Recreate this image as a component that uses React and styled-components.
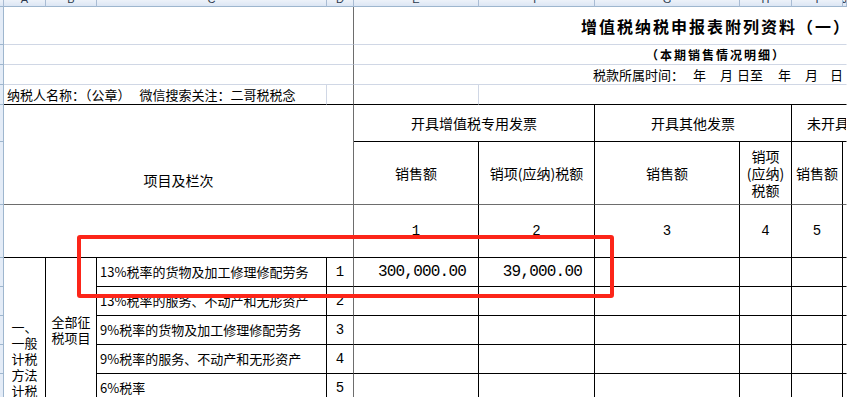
import React from 'react';
import styled, { createGlobalStyle } from 'styled-components';

const GlobalStyle = createGlobalStyle`
  html, body { margin: 0; padding: 0; background: #fff; }
  body { font-family: "Noto Sans CJK SC", sans-serif; color: #000; }
`;

const COLS = [42, 51, 230, 27, 125, 116, 145, 52, 51, 4];
const LETTERS = ['A', 'B', 'C', 'D', 'E', 'F', 'G', 'H', 'I', 'J'];
const ROWS = [38, 20, 20, 20, 37, 63, 53, 29, 29, 29, 29, 29, 29, 29];
const LINE = { grid: '#d0d7e5', black: '#000', freeze: '#6d6d6d', none: 'transparent' };

const Page = styled.div`
  position: relative;
  width: 847px;
  height: 397px;
  overflow: hidden;
  display: flex;
  flex-direction: column;
  background: #fff;
`;

const ColHeader = styled.div`
  display: flex;
  flex: none;
  height: 7px;
`;

const ColHeadCell = styled.div`
  box-sizing: border-box;
  flex: ${p => (p.$w ? `0 0 ${p.$w}px` : '1 1 auto')};
  height: 7px;
  border-right: 1px solid #a9bcd4;
  border-bottom: 1px solid #9eb6ce;
  background: linear-gradient(#edf2f9, #dce6f4);
  display: flex;
  align-items: flex-end;
  justify-content: center;
  overflow: hidden;
  font-family: "Liberation Sans", sans-serif;
  font-size: 11px;
  color: #2c3a4d;
`;

const ColLetter = styled.span`
  line-height: 11px;
  margin-bottom: 1px;
`;

const Main = styled.div`
  display: flex;
  flex: 1;
  min-height: 0;
`;

const RowHeads = styled.div`
  display: flex;
  flex-direction: column;
  flex: 0 0 4px;
`;

const RowHeadCell = styled.div`
  box-sizing: border-box;
  flex: 0 0 ${p => p.$h}px;
  background: #e4ecf7;
  border-right: 1px solid #9eb6ce;
  border-bottom: 1px solid #9eb6ce;
`;

const Sheet = styled.div`
  display: grid;
  grid-template-columns: ${COLS.map(c => `${c}px`).join(' ')};
  grid-template-rows: ${ROWS.map(r => `${r}px`).join(' ')};
  width: 843px;
`;

const Cell = styled.div`
  grid-column: ${p => p.$c} / span ${p => p.$cs || 1};
  grid-row: ${p => p.$r} / span ${p => p.$rs || 1};
  box-sizing: border-box;
  min-width: 0;
  overflow: hidden;
  display: flex;
  align-items: ${p => p.$align || 'center'};
  justify-content: ${p => p.$justify || 'center'};
  padding: ${p => `${p.$pt || 0}px ${p.$pr || 0}px 0 ${p.$pl || 0}px`};
  border-right: 1px solid ${p => LINE[p.$br || 'grid']};
  border-bottom: 1px solid ${p => LINE[p.$bb || 'grid']};
  white-space: nowrap;
`;

const Title = styled.span`
  font-size: 16px;
  font-weight: 700;
  letter-spacing: 2px;
  line-height: 20px;
`;

const Subtitle = styled.span`
  font-size: 12px;
  font-weight: 700;
  letter-spacing: 2px;
  line-height: 16px;
`;

const Plain = styled.span`
  font-size: 13px;
  line-height: 16px;
`;

const Gap = styled.span`
  display: inline-block;
  width: ${p => p.$w}px;
`;

const HeadText = styled.span`
  flex: none;
  font-size: 14px;
  line-height: 17px;
  text-align: center;
  white-space: ${p => (p.$w ? 'normal' : 'nowrap')};
  width: ${p => (p.$w ? `${p.$w}px` : 'auto')};
`;

const Stack = styled.span`
  font-size: 13px;
  line-height: 16px;
  text-align: center;
  white-space: normal;
  width: ${p => p.$w}px;
`;

const Digit = styled.span`
  font-family: "Liberation Mono", monospace;
  font-size: 14px;
  line-height: 16px;
`;

const Amount = styled.span`
  font-family: "Liberation Mono", monospace;
  font-size: 16px;
  letter-spacing: -0.8px;
  line-height: 18px;
`;

const Highlight = styled.div`
  position: absolute;
  left: 77px;
  top: 235px;
  width: 537px;
  height: 63px;
  box-sizing: border-box;
  border: 4px solid #fc2519;
  border-radius: 3px;
  pointer-events: none;
`;

const bodyRows = [
  { label: '13%税率的货物及加工修理修配劳务', no: '1', sales: '300,000.00', tax: '39,000.00' },
  { label: '13%税率的服务、不动产和无形资产', no: '2' },
  { label: '9%税率的货物及加工修理修配劳务', no: '3' },
  { label: '9%税率的服务、不动产和无形资产', no: '4' },
  { label: '6%税率', no: '5' },
];

export default function App() {
  return (
    <>
      <GlobalStyle />
      <Page>
        <ColHeader>
          <ColHeadCell $w={4} />
          {LETTERS.map((l, i) => (
            <ColHeadCell key={l} $w={i === COLS.length - 1 ? 0 : COLS[i]}>
              <ColLetter>{l}</ColLetter>
            </ColHeadCell>
          ))}
        </ColHeader>
        <Main>
          <RowHeads>
            {ROWS.map((h, i) => (
              <RowHeadCell key={i} $h={h} />
            ))}
          </RowHeads>
          <Sheet>
            {/* Title rows */}
            <Cell $c={1} $cs={4} $r={1} $br="freeze" />
            <Cell $c={5} $cs={6} $r={1} $br="none" $justify="flex-start" $pl={227}>
              <Title>增值税纳税申报表附列资料（一）</Title>
            </Cell>
            <Cell $c={1} $cs={4} $r={2} $br="freeze" />
            <Cell $c={5} $cs={6} $r={2} $br="none" $justify="flex-start" $pl={292}>
              <Subtitle>（本期销售情况明细）</Subtitle>
            </Cell>
            <Cell $c={1} $cs={4} $r={3} $br="freeze" />
            <Cell $c={5} $cs={6} $r={3} $br="none" $justify="flex-start" $pl={239}>
              <Plain>
                税款所属时间：<Gap $w={9} />年<Gap $w={14} />月<Gap $w={4} />日至<Gap $w={15} />年
                <Gap $w={14} />月<Gap $w={12} />日
              </Plain>
            </Cell>
            <Cell $c={1} $cs={3} $r={4} $bb="black" $justify="flex-start" $pl={3}>
              <Plain>
                纳税人名称：（公章）<Gap $w={9} />微信搜索关注：二哥税税念
              </Plain>
            </Cell>
            <Cell $c={4} $r={4} $br="freeze" $bb="black" />
            <Cell $c={5} $r={4} $bb="black" />
            <Cell $c={6} $cs={5} $r={4} $br="none" $bb="black" />

            {/* Header */}
            <Cell $c={1} $cs={4} $r={5} $rs={2} $br="freeze" $bb="freeze" $align="flex-start" $pt={67}>
              <HeadText>项目及栏次</HeadText>
            </Cell>
            <Cell $c={1} $cs={4} $r={7} $br="freeze" $bb="black" />
            <Cell $c={5} $cs={2} $r={5} $br="black" $bb="black">
              <HeadText>开具增值税专用发票</HeadText>
            </Cell>
            <Cell $c={7} $cs={2} $r={5} $br="black" $bb="black">
              <HeadText>开具其他发票</HeadText>
            </Cell>
            <Cell $c={9} $cs={2} $r={5} $br="none" $bb="black" $justify="flex-start" $pl={15}>
              <HeadText>未开具发票</HeadText>
            </Cell>
            <Cell $c={5} $r={6} $br="black" $bb="freeze">
              <HeadText>销售额</HeadText>
            </Cell>
            <Cell $c={6} $r={6} $br="black" $bb="freeze">
              <HeadText>销项(应纳)税额</HeadText>
            </Cell>
            <Cell $c={7} $r={6} $br="black" $bb="freeze">
              <HeadText>销售额</HeadText>
            </Cell>
            <Cell $c={8} $r={6} $br="black" $bb="freeze">
              <HeadText $w={44}>销项 (应纳) 税额</HeadText>
            </Cell>
            <Cell $c={9} $r={6} $br="black" $bb="freeze">
              <HeadText>销售额</HeadText>
            </Cell>
            <Cell $c={10} $r={6} $br="none" $bb="freeze" />
            {['1', '2', '3', '4', '5'].map((n, i) => (
              <Cell key={n} $c={5 + i} $r={7} $br="black" $bb="black">
                <Digit>{n}</Digit>
              </Cell>
            ))}
            <Cell $c={10} $r={7} $br="none" $bb="black" />

            {/* Body */}
            <Cell $c={1} $r={8} $rs={7} $br="black" $bb="black">
              <Stack $w={28}>一、一般计税方法计税</Stack>
            </Cell>
            <Cell $c={2} $r={8} $rs={5} $br="black" $bb="black">
              <Stack $w={40}>全部征税项目</Stack>
            </Cell>
            {bodyRows.map((row, i) => (
              <React.Fragment key={row.no}>
                <Cell $c={3} $r={8 + i} $br="black" $bb="black" $justify="flex-start" $pl={3}>
                  <Plain>{row.label}</Plain>
                </Cell>
                <Cell $c={4} $r={8 + i} $br="freeze" $bb="black">
                  <Digit>{row.no}</Digit>
                </Cell>
                <Cell $c={5} $r={8 + i} $br="black" $bb="black" $justify="flex-end" $pr={12}>
                  {row.sales && <Amount>{row.sales}</Amount>}
                </Cell>
                <Cell $c={6} $r={8 + i} $br="black" $bb="black" $justify="flex-end" $pr={12}>
                  {row.tax && <Amount>{row.tax}</Amount>}
                </Cell>
                <Cell $c={7} $r={8 + i} $br="black" $bb="black" />
                <Cell $c={8} $r={8 + i} $br="black" $bb="black" />
                <Cell $c={9} $r={8 + i} $br="black" $bb="black" />
                <Cell $c={10} $r={8 + i} $br="none" $bb="black" />
              </React.Fragment>
            ))}
          </Sheet>
        </Main>
        <Highlight />
      </Page>
    </>
  );
}
